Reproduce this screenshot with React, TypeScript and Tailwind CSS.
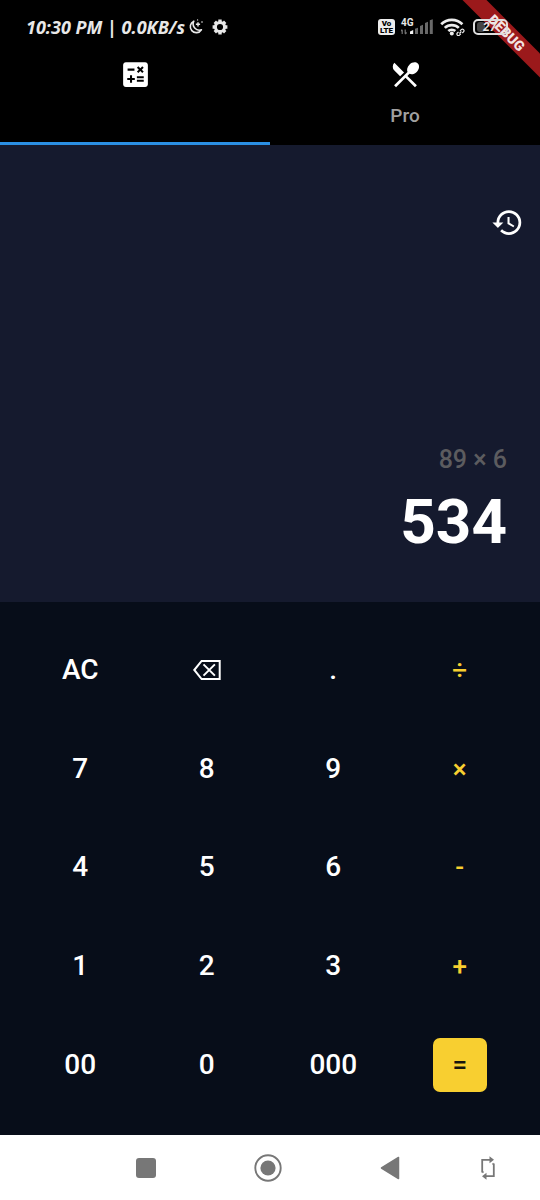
import { useState } from "react";
import type { ReactNode } from "react";
import { MdCalculate, MdHistory, MdRestaurantMenu } from "react-icons/md";

function MoonIcon() {
  return (
    <svg aria-hidden="true" className="h-4 w-4" viewBox="0 0 16 16" fill="none" stroke="currentColor" strokeWidth="1.6">
      <path d="M5.8 2.2A6 6 0 1 0 13.4 10.8A6.2 6.2 0 0 1 5.8 2.2Z" strokeLinejoin="round" />
      <path d="M10 3.2v4.2M7.9 5.3h4.2" strokeWidth="1.4" />
      <circle cx="14" cy="3" r="0.8" fill="currentColor" stroke="none" />
      <circle cx="9.6" cy="0.9" r="0.6" fill="currentColor" stroke="none" />
    </svg>
  );
}

function GearIcon() {
  return (
    <svg aria-hidden="true" className="h-4 w-4" viewBox="0 0 16 16" fill="none" stroke="currentColor">
      <circle cx="8" cy="8" r="4.6" strokeWidth="3" />
      <path d="M8 0.6v2.400M8 13v2.400M0.600 8H3M13 8h2.400M2.800 2.800l1.700 1.700M11.500 11.500l1.700 1.700M13.200 2.800l-1.700 1.700M4.500 11.500l-1.700 1.700" strokeWidth="3.400" />
    </svg>
  );
}

function SignalIcon() {
  return (
    <svg aria-hidden="true" className="h-4 w-8" viewBox="0 0 32 16">
      <path d="M1.2 15V10.8M0 12l1.2-1.4M4.2 10.5v4.2M4.2 15l1.4-1.5" stroke="#777" strokeWidth="1.2" fill="none" />
      <path d="M9 15V12.500l3.200-1.500v4Z" fill="#f5f5f5" />
      <path d="M14 15v-5.200l3-1v6.200ZM19 15V7l3-1.200V15ZM24 15V4l3-1.200V15ZM28.800 15V1.200l3-1V15Z" fill="#696969" />
    </svg>
  );
}

function WifiIcon() {
  return (
    <svg aria-hidden="true" className="h-[18px] w-[26px]" viewBox="0 0 26 18" fill="none" stroke="#ededed">
      <path d="M1.200 6.300a15 15 0 0 1 21.200 0M4.800 9.900a10 10 0 0 1 14 0M8.300 13.100a5.200 5.200 0 0 1 7 0" strokeWidth="2.700" />
      <circle cx="11.800" cy="15.600" r="2" fill="#ededed" stroke="none" />
      <path d="m18.500 13.800-1.200 1.200a1.500 1.500 0 0 0 2.200 2.200l1.300-1.300M22.300 15l1.200-1.200a1.500 1.500 0 0 0-2.200-2.200L20 12.900M19.400 15.500l2-2" strokeWidth="1.200" />
    </svg>
  );
}

function BackspaceIcon() {
  return (
    <svg aria-hidden="true" className="h-[22px] w-7" viewBox="0 0 28 22" fill="none" stroke="currentColor" strokeWidth="2">
      <path d="M1.300 11 8.600 1.900H26.700V20.100H8.600ZM10.500 5.400l11.400 11.200M21.900 5.400 10.500 16.600" />
    </svg>
  );
}

function StatusBar() {
  return (
    <div className="relative z-20 flex h-[54px] items-center justify-between pl-[26px] pr-8 text-[#e8e8e8]">
      <div className="flex items-center">
        <span className="font-['Noto_Sans',sans-serif] text-[18px] font-bold italic leading-6">10:30 PM | 0.0KB/s</span>
        <span className="ml-[3px]"><MoonIcon /></span>
        <span className="ml-2"><GearIcon /></span>
      </div>
      <div className="flex items-center">
        <span className="flex h-4 w-[17px] flex-col items-center justify-center rounded-[3px] bg-[#ededed] font-['Roboto',sans-serif] text-[8px] font-black leading-[7px] text-black">
          <span>Vo</span>
          <span>LTE</span>
        </span>
        <span className="relative ml-[6px]">
          <SignalIcon />
          <span className="absolute left-0 -top-px font-['Roboto',sans-serif] text-[10px] font-bold leading-[10px]">4G</span>
        </span>
        <span className="ml-[7px]"><WifiIcon /></span>
        <span className="relative ml-[7px] flex h-4 w-[35px] items-center overflow-hidden rounded-[5px] border-2 border-[#dedede] pl-2 font-['Roboto',sans-serif] text-[12px] font-bold italic leading-3">
          <span className="absolute left-[2px] top-px h-[10px] w-2 rounded-[3px] bg-[#444]" />
          <span className="relative">27</span>
        </span>
      </div>
    </div>
  );
}

function DebugBanner() {
  return (
    <div className="pointer-events-none absolute right-0 top-0 z-10 h-20 w-20 overflow-hidden">
      <div className="absolute -right-[37px] top-[24px] flex h-[17px] w-[140px] rotate-45 items-center justify-center bg-[#9b191b] text-[14px] font-black leading-4 text-[#f3e4e4]">
        DEBUG
      </div>
    </div>
  );
}

function Tab({ label, active, onSelect, children }: { label: string; active: boolean; onSelect: () => void; children: ReactNode }) {
  return (
    <button
      type="button"
      role="tab"
      aria-selected={active}
      aria-label={label}
      onClick={onSelect}
      className={`flex flex-1 flex-col items-center border-b-[3px] pt-1 text-white ${active ? "border-[#2b8fe3]" : "border-transparent"}`}
    >
      {children}
    </button>
  );
}

const keys = ["AC", "⌫", ".", "÷", "7", "8", "9", "×", "4", "5", "6", "-", "1", "2", "3", "+", "00", "0", "000", "="];
const operators = ["÷", "×", "-", "+"];

function keyStyle(key: string): string {
  if (key === "=") return "bg-[#f8cf30] text-[26px] text-[#17150e]";
  if (operators.includes(key)) return "text-[26px] text-[#f8cf30]";
  return "text-[28px] text-white";
}

function compute(expression: string): string {
  const parts = expression.split(" ");
  let total = Number(parts[0]);
  for (let i = 1; i + 1 < parts.length; i += 2) {
    const value = Number(parts[i + 1]);
    if (parts[i] === "+") total += value;
    else if (parts[i] === "-") total -= value;
    else if (parts[i] === "×") total *= value;
    else total /= value;
  }
  return String(total);
}

export default function App() {
  const [tab, setTab] = useState("calculator");
  const [expression, setExpression] = useState("89 × 6");
  const [result, setResult] = useState("534");

  function press(key: string) {
    if (key === "AC") {
      setExpression("");
      setResult("0");
    } else if (key === "⌫") setExpression(expression.trimEnd().slice(0, -1).trimEnd());
    else if (key === "=") setResult(compute(expression));
    else if (operators.includes(key)) setExpression(`${expression} ${key} `);
    else setExpression(expression + key);
  }

  return (
    <div className="relative flex min-h-screen flex-col bg-[#070d19] font-['Roboto',sans-serif] text-white">
      <header className="bg-black">
        <StatusBar />
        <div role="tablist" className="flex h-[91px]">
          <Tab label="Calculator" active={tab === "calculator"} onSelect={() => setTab("calculator")}>
            <MdCalculate className="h-[33px] w-[33px]" />
          </Tab>
          <Tab label="Pro" active={tab === "pro"} onSelect={() => setTab("pro")}>
            <MdRestaurantMenu className="h-[33px] w-[33px]" />
            <span className="mt-[13px] text-[19px] font-medium leading-6 text-[#a0a0a0]">Pro</span>
          </Tab>
        </div>
      </header>
      <DebugBanner />

      <main className="grid grow grid-rows-[457fr_533fr]">
        <section aria-label="Result" className="flex flex-col items-end justify-between bg-[#151a2e] pb-[44px] pt-[61px]">
          <button type="button" aria-label="History" className="mr-4">
            <MdHistory className="h-[33px] w-[33px]" />
          </button>
          <output className="flex flex-col items-end pr-[33px]">
            <span className="text-[25px] font-medium leading-7 text-[#5c5c5f]">{expression}</span>
            <span className="mt-3 text-[62px] font-bold leading-[72px]">{result}</span>
          </output>
        </section>

        <section aria-label="Keypad" className="grid grid-cols-4 grid-rows-5 px-[17px] pb-[21px] pt-[19px] font-medium">
          {keys.map((key) => (
            <div key={key} className="flex items-center justify-center">
              <button
                type="button"
                aria-label={key === "⌫" ? "Backspace" : undefined}
                onClick={() => press(key)}
                className={`flex h-[54px] min-w-[54px] items-center justify-center rounded-[7px] leading-8 ${keyStyle(key)}`}
              >
                {key === "⌫" ? <BackspaceIcon /> : key}
              </button>
            </div>
          ))}
        </section>
      </main>

      <nav aria-label="System" className="grid h-[65px] grid-cols-[122fr_122fr_122fr_74fr] items-center bg-white pl-[85px] pr-[15px] text-[#777777]">
        <button type="button" aria-label="Recent apps" className="flex justify-center">
          <span className="h-5 w-5 rounded-[3px] bg-[#777777]" />
        </button>
        <button type="button" aria-label="Home" className="flex justify-center">
          <svg className="h-7 w-7" viewBox="0 0 28 28">
            <circle cx="14" cy="14" r="12.700" fill="none" stroke="currentColor" strokeWidth="1.900" />
            <circle cx="14" cy="14" r="7.600" fill="currentColor" />
          </svg>
        </button>
        <button type="button" aria-label="Back" className="flex justify-center">
          <svg className="h-6 w-5" viewBox="0 0 20 24">
            <path d="M18.500 1.500v21L1.500 12Z" fill="currentColor" stroke="currentColor" strokeWidth="1.500" strokeLinejoin="round" />
          </svg>
        </button>
        <button type="button" aria-label="Rotate screen" className="flex justify-center">
          <svg className="h-6 w-4" viewBox="0 0 16 24" fill="none" stroke="currentColor" strokeWidth="1.800">
            <path d="M2.200 16.500V3.800h8M13.800 7.500v12.700H6M2.200 16.500l1.200-1.200M13.800 7.500l-1.200 1.200" />
            <path d="M9.500 0.300 14 3.800 9.500 7.300ZM6.500 16.700 2 20.200l4.500 3.500Z" fill="currentColor" stroke="none" />
          </svg>
        </button>
      </nav>
    </div>
  );
}
